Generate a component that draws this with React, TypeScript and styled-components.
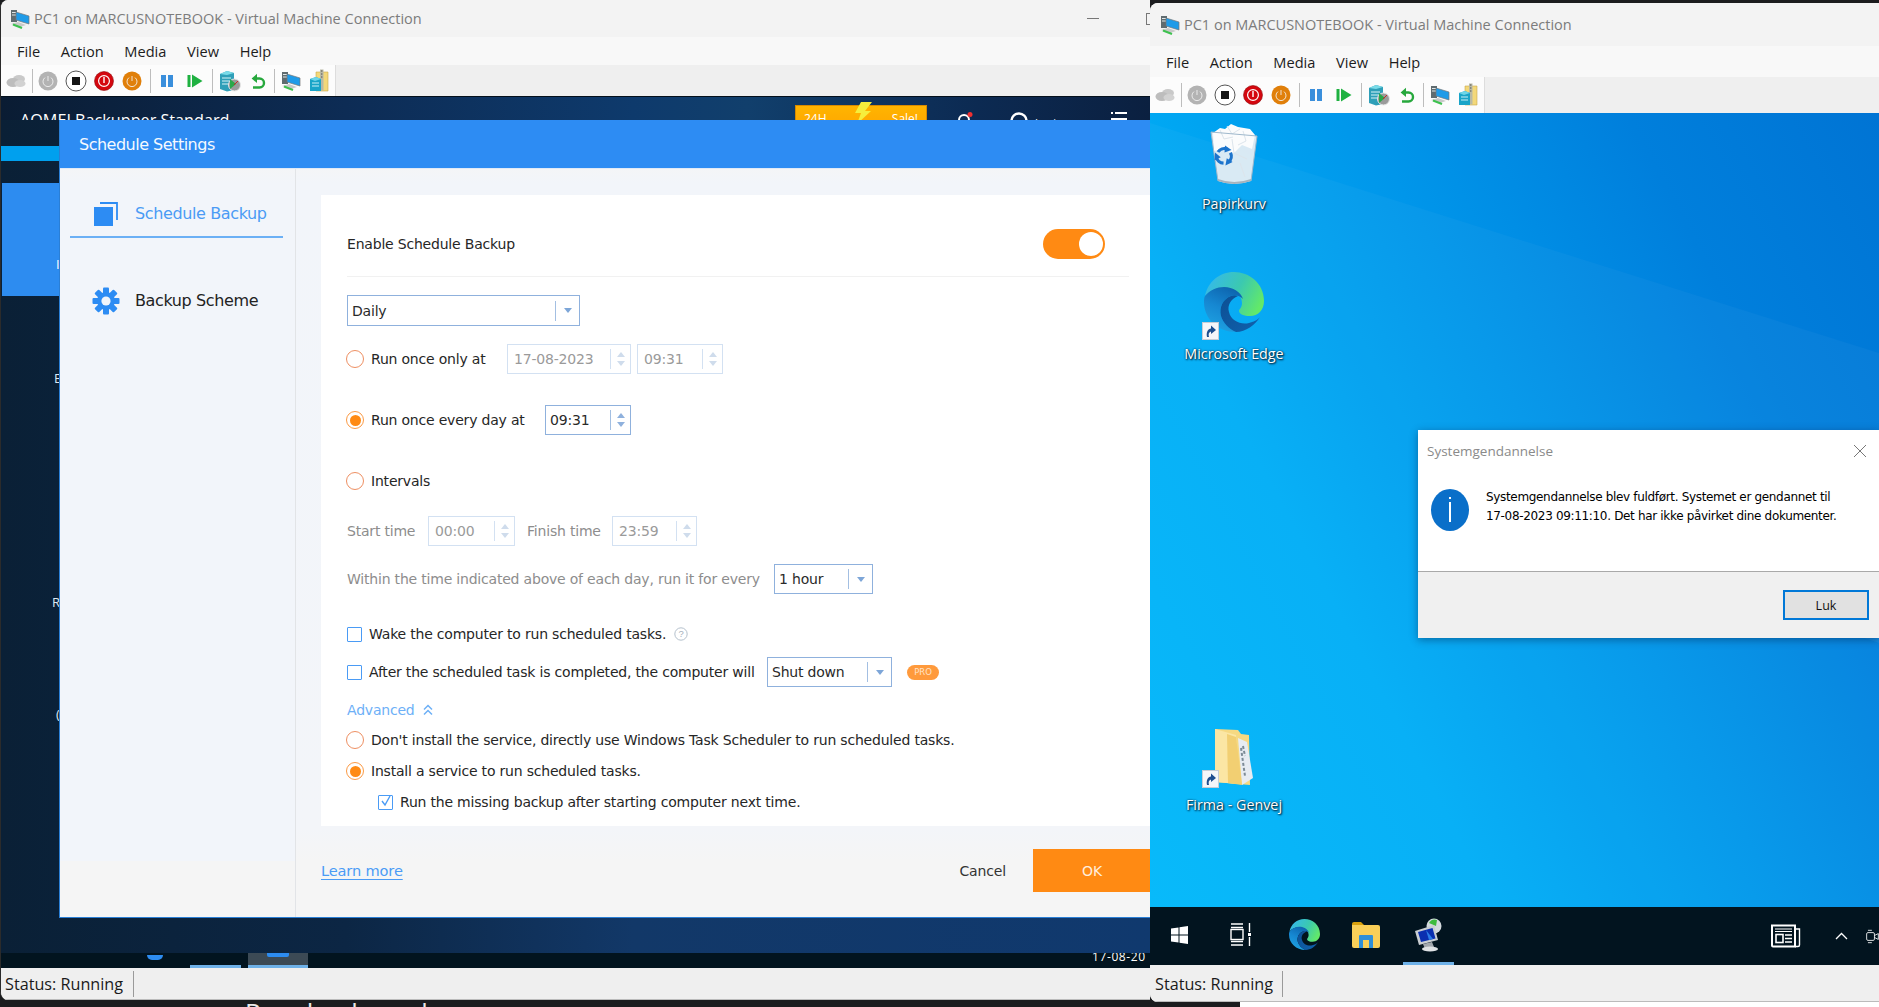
import { FC } from "react";
import styled, { createGlobalStyle } from "styled-components";

const Global = createGlobalStyle`
  html, body { margin: 0; padding: 0; height: 100%; overflow: hidden; background: #1b1c1e; }
  #root { width: 1879px; height: 1007px; overflow: hidden; }
`;

const UI = `"Open Sans", "Noto Sans", sans-serif`;
const TAHOMA = `"DejaVu Sans", "Noto Sans", sans-serif`;

const Page = styled.div`
  display: flex;
  width: 1879px;
  height: 1007px;
  overflow: hidden;
`;

const LeftColumn = styled.div`
  width: 1150px;
  display: flex;
  flex-direction: column;
`;

const RightColumn = styled.div`
  width: 729px;
  padding-top: 3px;
  display: flex;
  flex-direction: column;
`;

const Behind = styled.div`
  height: 7px;
  overflow: hidden;
  padding-left: 245px;
  font: 26px/24px ${UI};
  color: #e8e8e8;
  word-spacing: 2px;
`;

const WhiteScrap = styled.div`
  height: 5px;
  margin-left: 90px;
  background: #fff;
`;

const Window = styled.div<{ $h: number; $edge?: boolean }>`
  height: ${(p) => p.$h}px;
  display: flex;
  flex-direction: column;
  background: #f3f3f3;
  border-radius: 8px 0 0 8px;
  border-left: ${(p) => (p.$edge ? "1px solid #2b2b2b" : "none")};
  overflow: hidden;
`;

const TitleBar = styled.div<{ $h: number; $pad: number }>`
  height: ${(p) => p.$h}px;
  flex: none;
  display: flex;
  align-items: center;
  gap: 4px;
  padding-left: ${(p) => p.$pad}px;
  background: #f3f3f3;
  font: 14.5px ${UI};
  color: #7c7c7c;
`;

const MinButton = styled.div`
  width: 12px;
  height: 1px;
  background: #777;
  margin-left: auto;
`;

const MaxButton = styled.div`
  width: 10px;
  height: 10px;
  border: 1px solid #777;
  margin: 0 -8px 0 43px;
  flex: none;
`;

const MenuBar = styled.div<{ $h: number; $pad: number }>`
  height: ${(p) => p.$h}px;
  flex: none;
  display: flex;
  align-items: center;
  gap: 20.7px;
  padding-left: ${(p) => p.$pad}px;
  background: #f8f8f8;
  font: 14.6px ${UI};
  color: #1c1c1c;
`;

const ToolbarRow = styled.div<{ $h: number }>`
  height: ${(p) => p.$h}px;
  flex: none;
  background: #efefef;
`;

const Toolbar = styled.div<{ $pad: number }>`
  width: 335px;
  height: 100%;
  box-sizing: border-box;
  padding-left: ${(p) => p.$pad}px;
  display: flex;
  align-items: center;
  background: #fcfcfc;
  border-right: 1px solid #ddd;
`;

const Slot = styled.div`
  width: 28px;
  height: 24px;
  display: flex;
  align-items: center;
  justify-content: center;
`;

const ToolSep = styled.div<{ $l: number; $r: number }>`
  width: 1px;
  height: 24px;
  margin: 0 ${(p) => p.$r}px 0 ${(p) => p.$l}px;
  background: #bdbdbd;
`;

const StatusBar = styled.div<{ $h: number; $pad: number; $w: number }>`
  height: ${(p) => p.$h}px;
  flex: none;
  display: flex;
  align-items: center;
  padding-left: ${(p) => p.$pad}px;
  background: #efefef;
  font: 16.2px ${UI};
  color: #1a1a1a;
  box-shadow: inset 0 -1px 0 #bbb;

  span {
    width: ${(p) => p.$w}px;
    height: 26px;
    line-height: 26px;
    border-right: 1px solid #9a9a9a;
  }
`;

/* left guest: AOMEI */
const Screen = styled.div`
  position: relative;
  flex: 1;
  display: flex;
  flex-direction: column;
  overflow: hidden;
  background: #0a1c32;
`;

const AppBar = styled.div`
  height: 24px;
  flex: none;
  display: flex;
  overflow: hidden;
  background: linear-gradient(90deg, #0a1c33 0%, #0d2c55 30%, #0e3a6c 55%, #113f6c 65%, #0c2a52 85%, #0b2040 100%);
  border-top: 1px solid #04101c;
  box-sizing: border-box;
  color: #fff;
`;

const AppName = styled.div`
  width: 794px;
  padding: 14px 0 0 19px;
  box-sizing: border-box;
  font: 16.2px/18px ${UI};
`;

const Promo = styled.div`
  width: 132px;
  height: 40px;
  margin-top: 8px;
  padding: 0 8px;
  box-sizing: border-box;
  display: flex;
  justify-content: space-between;
  background: linear-gradient(#ffb400, #ff9d00);
  border: 1px solid #d88a00;
  position: relative;
  font: 12px/26px ${UI};

  svg {
    position: absolute;
    left: 56px;
    top: -4px;
  }
`;

const BarIcons = styled.div`
  display: flex;
  align-items: flex-start;
  padding-top: 15px;
  margin-left: 30px;

  svg {
    flex: none;
  }
`;

const BarGap = styled.div<{ $w: number }>`
  width: ${(p) => p.$w}px;
  flex: none;
`;

const LoginText = styled.span`
  font: 11px/14px ${UI};
  margin: 4px 0 0 6px;
`;

const AppMiddle = styled.div`
  flex: 1;
  background: linear-gradient(90deg, #0a2036 0%, #0c2644 30%, #123868 55%, #10396e 100%);
`;

const AppNav = styled.div`
  width: 59px;
  display: flex;
  flex-direction: column;
  color: #dfe8f2;
  font: 13px ${UI};
`;

const NavBand = styled.div`
  height: 15px;
  margin-top: 26px;
  background: #00a0ee;
`;

const NavActive = styled.div`
  height: 113px;
  margin: 22px 0 0 1px;
  background: #2d8cf0;
  padding: 72px 0 0 54px;
  box-sizing: border-box;
  color: #fff;
`;

const NavLetter = styled.div<{ $top: number; $left: number }>`
  margin: ${(p) => p.$top}px 0 0 ${(p) => p.$left}px;
  line-height: 18px;
`;

const AppBottom = styled.div`
  height: 15px;
  flex: none;
  display: flex;
  background: #02141f;
  overflow: hidden;
`;

const BottomDot = styled.div`
  width: 16px;
  height: 5px;
  margin: 2px 27px 0 146px;
  background: #2d8cf0;
  border-radius: 0 0 9px 9px;
`;

const BottomTab = styled.div<{ $w: number; $on?: boolean }>`
  width: ${(p) => p.$w}px;
  height: 15px;
  margin-right: 7px;
  box-sizing: border-box;
  background: ${(p) => (p.$on ? "#3c4a55" : "transparent")};
  border-bottom: 3px solid #6eb1e8;
  display: flex;
  justify-content: center;

  i {
    display: ${(p) => (p.$on ? "block" : "none")};
    width: 22px;
    height: 4px;
    background: #2d8cf0;
    border-radius: 0 0 2px 2px;
  }
`;

const BottomDate = styled.div`
  margin-left: auto;
  width: 58px;
  white-space: nowrap;
  overflow: hidden;
  font: 12px/12px ${UI};
  color: #fff;
  letter-spacing: 0.6px;
  margin-top: -2px;
`;

/* Schedule Settings */
const Dialog = styled.div`
  position: absolute;
  left: 58px;
  top: 24px;
  width: 1092px;
  height: 798px;
  display: flex;
  flex-direction: column;
  background: #f5f5f5;
  box-sizing: border-box;
  border-left: 1px solid #2a7fd6;
  border-bottom: 1px solid #2a7fd6;
`;

const DialogHead = styled.div`
  height: 49px;
  flex: none;
  padding-left: 19px;
  display: flex;
  align-items: center;
  background: #2d8cf3;
  border-bottom: 1px solid #dfeaf7;
  box-sizing: border-box;
  color: #f4f9ff;
  font: 16px ${TAHOMA};
  letter-spacing: -0.5px;
`;

const DialogBody = styled.div`
  flex: 1;
  display: flex;
  min-height: 0;
`;

const Side = styled.div`
  width: 236px;
  flex: none;
  box-sizing: border-box;
  border-right: 1px solid #e2e4e7;
  padding: 22px 12px 0 10px;
  background: linear-gradient(#f4f5f7 0, #f2f5fa 14px, #f2f5fa 692px, #f5f5f5 692px);
`;

const SideItem = styled.div<{ $on?: boolean }>`
  height: 47px;
  display: flex;
  align-items: center;
  box-sizing: border-box;
  border-bottom: ${(p) => (p.$on ? "2px solid #6cb0f5" : "none")};
  margin-bottom: ${(p) => (p.$on ? "39px" : "0")};
  color: ${(p) => (p.$on ? "#4a9bf5" : "#222")};
  font: 16px ${TAHOMA};
  letter-spacing: -0.38px;
`;

const SideIcon = styled.div`
  width: 65px;
  display: flex;
  justify-content: center;
  padding-left: 7px;
  box-sizing: border-box;
  flex: none;
`;

const Main = styled.div`
  flex: 1;
  display: flex;
  flex-direction: column;
  padding: 26px 0 0 25px;
  background: linear-gradient(#f4f5f7 0, #f2f5fa 14px, #f3f5f9 660px, #f5f5f5 692px);
  min-width: 0;
`;

const Panel = styled.div`
  height: 631px;
  flex: none;
  box-sizing: border-box;
  padding: 0 46px 0 26px;
  background: #fff;
  display: flex;
  flex-direction: column;
  font: 14px ${TAHOMA};
  letter-spacing: -0.2px;
  color: #262626;
`;

const Row = styled.div<{ $top: number; $h: number; $between?: boolean; $indent?: number }>`
  height: ${(p) => p.$h}px;
  margin-top: ${(p) => p.$top}px;
  padding-left: ${(p) => p.$indent ?? 0}px;
  flex: none;
  display: flex;
  align-items: center;
  justify-content: ${(p) => (p.$between ? "space-between" : "flex-start")};
  white-space: nowrap;
`;

const Rule = styled.div`
  height: 1px;
  margin: 17px -24px 0 0;
  background: #f1f1f1;
  flex: none;
`;

const Toggle = styled.div`
  width: 62px;
  height: 30px;
  border-radius: 15px;
  background: #ff8a13;
  position: relative;

  &::after {
    content: "";
    position: absolute;
    right: 2px;
    top: 3px;
    width: 24px;
    height: 24px;
    border-radius: 50%;
    background: #fff;
  }
`;

const Radio = styled.span<{ $on?: boolean }>`
  width: 18px;
  height: 18px;
  flex: none;
  box-sizing: border-box;
  margin: 0 7px 0 -1px;
  border-radius: 50%;
  border: 1.5px solid ${(p) => (p.$on ? "#fb9a45" : "#ee8f62")};
  display: flex;
  align-items: center;
  justify-content: center;

  &::after {
    content: "";
    display: ${(p) => (p.$on ? "block" : "none")};
    width: 11px;
    height: 11px;
    border-radius: 50%;
    background: #ff8a13;
  }
`;

const Check = styled.span`
  width: 15px;
  height: 15px;
  flex: none;
  box-sizing: border-box;
  margin-right: 7px;
  border: 1.5px solid #4a9bf5;
  border-radius: 1px;
  position: relative;

  svg {
    position: absolute;
    left: 1px;
    top: -2px;
  }
`;

const Label = styled.span<{ $w?: number; $dim?: boolean; $pl?: number }>`
  display: inline-block;
  flex: none;
  box-sizing: border-box;
  width: ${(p) => (p.$w ? `${p.$w}px` : "auto")};
  padding-left: ${(p) => p.$pl ?? 0}px;
  color: ${(p) => (p.$dim ? "#8d8d8d" : "inherit")};
`;

const Field = styled.div<{ $w: number; $h?: number; $soft?: boolean; $ml?: number }>`
  width: ${(p) => p.$w}px;
  height: ${(p) => p.$h ?? 30}px;
  margin-left: ${(p) => p.$ml ?? 0}px;
  flex: none;
  box-sizing: border-box;
  display: flex;
  align-items: center;
  padding-left: ${(p) => (p.$soft ? 6 : 4)}px;
  border: ${(p) => (p.$soft ? "1.5px solid #d3e1f2" : "1.5px solid #8fb1dd")};
  color: ${(p) => (p.$soft ? "#9a9a9a" : "#2a2a2a")};
  background: #fff;

  b {
    font-weight: 400;
    flex: 1;
  }
`;

const SpinArrows = styled.div<{ $soft?: boolean }>`
  width: 20px;
  height: 20px;
  flex: none;
  box-sizing: border-box;
  border-left: 1.5px solid ${(p) => (p.$soft ? "#d3e1f2" : "#a3bfe2")};
  display: flex;
  flex-direction: column;
  align-items: center;
  justify-content: center;
  gap: 4px;
`;

const Arrow = styled.i<{ $up?: boolean; $c: string }>`
  width: 0;
  height: 0;
  border-left: 4px solid transparent;
  border-right: 4px solid transparent;
  border-bottom: ${(p) => (p.$up ? `5px solid ${p.$c}` : "none")};
  border-top: ${(p) => (p.$up ? "none" : `5px solid ${p.$c}`)};
`;

const DropArrow = styled.div`
  width: 24px;
  height: 20px;
  flex: none;
  box-sizing: border-box;
  border-left: 1.5px solid #a3bfe2;
  display: flex;
  align-items: center;
  justify-content: center;
`;

const Pro = styled.span`
  width: 32px;
  height: 15px;
  margin-left: 15px;
  border-radius: 8px;
  background: #ff9a3c;
  color: #ffe3c6;
  font: 8.5px/15px ${TAHOMA};
  letter-spacing: 0;
  text-align: center;
`;

const Advanced = styled.span`
  color: #6db0f7;
  display: flex;
  align-items: center;
  gap: 8px;
`;

const HelpWrap = styled.span`
  margin-left: 8px;
  display: flex;
`;

const DialogFoot = styled.div`
  flex: 1;
  display: flex;
  align-items: center;
  padding-bottom: 2px;
  font: 14px ${TAHOMA};
  letter-spacing: -0.15px;
`;

const LearnMore = styled.span`
  color: #4a9bf5;
  font-size: 14.6px;
  text-decoration: underline;
  text-underline-offset: 3px;
`;

const Cancel = styled.span`
  margin-left: auto;
  margin-right: 27px;
  color: #333;
`;

const OkButton = styled.div`
  width: 118px;
  height: 43px;
  background: #ff8a13;
  color: #ffeede;
  display: flex;
  align-items: center;
  justify-content: center;
`;

/* right guest: Windows 10 */
const Desktop = styled.div`
  position: relative;
  flex: 1;
  overflow: hidden;
  background: linear-gradient(62deg, #00b8fa 0%, #00aef6 30%, #0096ea 55%, #007fdc 78%, #0074d4 100%);
`;

const Wallpaper = styled.svg`
  position: absolute;
  inset: 0;
`;

const DeskIcon = styled.div<{ $x: number; $y: number }>`
  position: absolute;
  left: ${(p) => p.$x}px;
  top: ${(p) => p.$y}px;
  width: 120px;
  display: flex;
  flex-direction: column;
  align-items: center;
`;

const DeskArt = styled.div<{ $h: number }>`
  height: ${(p) => p.$h}px;
  position: relative;
`;

const DeskLabel = styled.div<{ $mt: number }>`
  margin-top: ${(p) => p.$mt}px;
  font: 14.3px/18px ${UI};
  color: #fff;
  text-shadow: 1px 1px 2px #012, 0 0 2px rgba(0, 20, 40, 0.8);
  white-space: nowrap;
`;

const ShortcutBadge = styled.div<{ $x: number; $y: number }>`
  position: absolute;
  left: ${(p) => p.$x}px;
  top: ${(p) => p.$y}px;
  width: 17px;
  height: 18px;
  background: #f4f6f9;
  border: 1px solid #c5cdd6;
  box-sizing: border-box;
  display: flex;
  align-items: center;
  justify-content: center;
`;

const SysDialog = styled.div`
  position: absolute;
  left: 268px;
  top: 317px;
  width: 461px;
  height: 208px;
  display: flex;
  flex-direction: column;
  background: #fff;
  box-shadow: 0 2px 8px rgba(0, 30, 70, 0.45);
`;

const SysHead = styled.div`
  height: 42px;
  flex: none;
  display: flex;
  align-items: center;
  justify-content: space-between;
  padding: 0 12px 0 9px;
  font: 13.5px ${UI};
  color: #8a8a8a;
`;

const SysBody = styled.div`
  height: 100px;
  flex: none;
  display: flex;
  padding: 15px 0 0 13px;
  box-sizing: border-box;
  border-bottom: 1px solid #a9a9a9;
`;

const InfoCircle = styled.div`
  width: 38px;
  height: 42px;
  flex: none;
  margin: 2px 17px 0 0;
  border-radius: 50%;
  background: #0a6fc9;
  display: flex;
  align-items: center;
  justify-content: center;
`;

const InfoMark = styled.div`
  width: 2px;
  height: 20px;
  margin-top: 4px;
  background: #fff;
  position: relative;

  &::before {
    content: "";
    position: absolute;
    top: -5px;
    left: 0;
    width: 2px;
    height: 2px;
    background: #fff;
  }
`;

const SysText = styled.div`
  font: 12px/19px ${TAHOMA};
  letter-spacing: -0.33px;
  color: #000;
  white-space: nowrap;
  margin-top: 1px;
`;

const SysFoot = styled.div`
  flex: 1;
  display: flex;
  justify-content: flex-end;
  padding: 18px 10px 0 0;
  background: #f0f0f0;
`;

const LukButton = styled.div`
  width: 86px;
  height: 30px;
  box-sizing: border-box;
  border: 2px solid #0078d7;
  background: #e1e1e1;
  display: flex;
  align-items: center;
  justify-content: center;
  font: 12.5px ${UI};
  color: #111;
`;

const Taskbar = styled.div`
  height: 58px;
  flex: none;
  display: flex;
  align-items: center;
  background: #02141f;
`;

const TaskSlot = styled.div<{ $w: number; $on?: boolean; $ml?: number }>`
  width: ${(p) => p.$w}px;
  height: 58px;
  margin-left: ${(p) => p.$ml ?? 0}px;
  flex: none;
  display: flex;
  align-items: center;
  justify-content: center;
  box-sizing: border-box;
  border-bottom: 3px solid ${(p) => (p.$on ? "#6eb1e8" : "transparent")};
`;

const Tray = styled.div`
  margin-left: auto;
  display: flex;
  align-items: center;
`;

const TraySlot = styled.div<{ $ml: number }>`
  margin-left: ${(p) => p.$ml}px;
  display: flex;
  flex: none;
`;

const TrayClip = styled.div`
  width: 13px;
  margin-left: 18px;
  overflow: hidden;
  display: flex;
`;

/* drawings */
const CloudIcon = () => (
  <svg width="20" height="14" viewBox="0 0 20 14">
    <ellipse cx="13" cy="5" rx="6" ry="4" fill="#c9c9c9" />
    <ellipse cx="7" cy="8.5" rx="6.5" ry="4.5" fill="#bdbdbd" />
    <ellipse cx="14" cy="9.5" rx="5.5" ry="3.6" fill="#d2d2d2" />
  </svg>
);

const PowerIcon: FC<{ bg: string }> = ({ bg }) => (
  <svg width="20" height="20" viewBox="0 0 20 20">
    <circle cx="10" cy="10" r="9.5" fill={bg} />
    <path d="M7 6.6a5 5 0 1 0 6 0" fill="none" stroke="#f4f4f4" strokeWidth="1" opacity=".85" />
    <path d="M10 5v5" stroke="#f4f4f4" strokeWidth="1" opacity=".85" />
  </svg>
);

const StopIcon = () => (
  <svg width="22" height="22" viewBox="0 0 22 22">
    <circle cx="11" cy="11" r="10" fill="#fff" stroke="#555" strokeWidth="1" />
    <rect x="7" y="7" width="8" height="8" fill="#151515" />
  </svg>
);

const ResetIcon = () => (
  <svg width="20" height="20" viewBox="0 0 20 20">
    <circle cx="10" cy="10" r="9.5" fill="#d4070f" stroke="#8e0b0b" strokeWidth=".6" />
    <circle cx="10" cy="10" r="5.4" fill="none" stroke="#fff" strokeWidth="1.2" />
    <rect x="9.3" y="6" width="1.4" height="6" fill="#fff" />
  </svg>
);

const PauseIcon = () => (
  <svg width="14" height="14" viewBox="0 0 14 14">
    <rect x="1" y="1" width="5" height="12" fill="#3a8fdc" />
    <rect x="8" y="1" width="5" height="12" fill="#3a8fdc" />
  </svg>
);

const PlayIcon = () => (
  <svg width="16" height="14" viewBox="0 0 16 14">
    <rect x="0.5" y="1" width="3" height="12" fill="#1fb141" />
    <path d="M5 0.5 15.5 7 5 13.5Z" fill="#1fb141" />
  </svg>
);

const CheckpointIcon = () => (
  <svg width="22" height="22" viewBox="0 0 22 22">
    <path d="M1 4 8 1l7 2v17l-7 1.5L1 19Z" fill="#2f9fb8" />
    <path d="M1 4 8 1l7 2-7 2Z" fill="#7adbe8" />
    <path d="M3 8h9M3 11h9M3 14h9" stroke="#d6f3f7" strokeWidth="1" />
    <circle cx="15.5" cy="15" r="6" fill="#9b9b9b" stroke="#e6e6e6" strokeWidth="1" />
    <path d="M11 9l6 5-6 5Z" fill="#2aa84a" />
    <path d="M15 15l4-4" stroke="#c22" strokeWidth="1" />
  </svg>
);

const UndoIcon = () => (
  <svg width="16" height="18" viewBox="0 0 16 18">
    <path d="M3 15.5h6.5a4.5 4.5 0 0 0 0-9H6" fill="none" stroke="#27a83d" strokeWidth="2.4" />
    <path d="M7 1.8 1.6 6.5 7 11Z" fill="#27a83d" />
  </svg>
);

const VmIcon = () => (
  <svg width="20" height="20" viewBox="0 0 20 20">
    <rect x="1" y="1" width="6" height="12" fill="#5f6b6f" />
    <rect x="2" y="3" width="4" height="1" fill="#dfe6e6" />
    <rect x="2" y="5.5" width="4" height="1" fill="#dfe6e6" />
    <path d="M6 3 19 7v8L6 11Z" fill="#1f9be8" stroke="#777" strokeWidth=".7" />
    <path d="M1 15l9 3 6-2-8-3Z" fill="#c9c9c9" />
    <path d="M3 15.5l9 3.5" stroke="#3dc14f" strokeWidth="2" />
  </svg>
);

const ZipIcon = () => (
  <svg width="20" height="24" viewBox="0 0 20 24">
    <path d="M7 3h12v19H7Z" fill="#f3d879" stroke="#c9a94a" strokeWidth=".6" />
    <rect x="11" y="0.5" width="3.5" height="21" fill="#b9b9a5" />
    <path d="M12 2h1.4M12 5h1.4M12 8h1.4" stroke="#555" />
    <path d="M1 10l6-2 5 2v12H1Z" fill="#19a4c8" />
    <path d="M1 10l6-2 5 2-6 2Z" fill="#6ed6e8" />
    <path d="M3 14h7M3 17h7" stroke="#c8f0f7" />
  </svg>
);

const HvToolbar: FC<{ pad: number }> = ({ pad }) => (
  <Toolbar $pad={pad}>
    <Slot><CloudIcon /></Slot>
    <ToolSep $l={2} $r={1} />
    <Slot><PowerIcon bg="#b3b3b3" /></Slot>
    <Slot><StopIcon /></Slot>
    <Slot><ResetIcon /></Slot>
    <Slot><PowerIcon bg="#e07f0a" /></Slot>
    <ToolSep $l={4} $r={2} />
    <Slot><PauseIcon /></Slot>
    <Slot><PlayIcon /></Slot>
    <ToolSep $l={3} $r={3} />
    <Slot><CheckpointIcon /></Slot>
    <Slot><UndoIcon /></Slot>
    <ToolSep $l={2} $r={2} />
    <Slot><VmIcon /></Slot>
    <Slot><ZipIcon /></Slot>
  </Toolbar>
);

const MenuItems = () => (
  <>
    <span>File</span>
    <span>Action</span>
    <span>Media</span>
    <span>View</span>
    <span>Help</span>
  </>
);

const ScheduleIcon = () => (
  <svg width="26" height="26" viewBox="0 0 26 26">
    <path d="M7 2h17v17" fill="none" stroke="#2d8cf3" strokeWidth="1.8" />
    <rect x="1" y="6" width="19" height="19" fill="#2d8cf3" />
  </svg>
);

const GearIcon = () => (
  <svg width="28" height="28" viewBox="0 0 28 28">
    <g fill="#2d8cf3">
      {[0, 45, 90, 135, 180, 225, 270, 315].map((a) => (
        <rect key={a} x="11" y="0.5" width="6" height="7" rx="1" transform={`rotate(${a} 14 14)`} />
      ))}
    </g>
    <circle cx="14" cy="14" r="9" fill="#2d8cf3" />
    <circle cx="14" cy="14" r="4.6" fill="#f2f5fa" />
  </svg>
);

const Spin: FC<{ value: string; w: number; soft?: boolean; ml?: number }> = ({ value, w, soft, ml }) => (
  <Field $w={w} $soft={soft} $ml={ml}>
    <b>{value}</b>
    <SpinArrows $soft={soft}>
      <Arrow $up $c={soft ? "#cfdcec" : "#8fb1dd"} />
      <Arrow $c={soft ? "#cfdcec" : "#8fb1dd"} />
    </SpinArrows>
  </Field>
);

const Select: FC<{ value: string; w: number; h?: number }> = ({ value, w, h }) => (
  <Field $w={w} $h={h}>
    <b>{value}</b>
    <DropArrow>
      <Arrow $c="#7da6d8" />
    </DropArrow>
  </Field>
);

const HelpIcon = () => (
  <HelpWrap>
    <svg width="14" height="14" viewBox="0 0 14 14">
      <circle cx="7" cy="7" r="6.2" fill="none" stroke="#b4c0cc" />
      <text x="7" y="10.3" textAnchor="middle" fontSize="9.5" fill="#a5b0bb" fontFamily="Liberation Sans">?</text>
    </svg>
  </HelpWrap>
);

const Chevrons = () => (
  <svg width="10" height="12" viewBox="0 0 10 12">
    <path d="M1 5.5 5 1.5l4 4M1 10.5l4-4 4 4" fill="none" stroke="#6db0f7" strokeWidth="1.5" />
  </svg>
);

const EdgeIcon: FC<{ size: number }> = ({ size }) => (
  <svg width={size} height={size} viewBox="0 0 60 60">
    <defs>
      <linearGradient id="edgeTop" x1="0" y1="0.2" x2="1" y2="0.6">
        <stop offset="0" stopColor="#35b8ee" />
        <stop offset="0.55" stopColor="#3bc9b0" />
        <stop offset="1" stopColor="#63e968" />
      </linearGradient>
      <linearGradient id="edgeLeft" x1="0.7" y1="0" x2="0.3" y2="1">
        <stop offset="0" stopColor="#0d63ad" />
        <stop offset="0.5" stopColor="#1688d2" />
        <stop offset="1" stopColor="#1fa3e2" />
      </linearGradient>
      <linearGradient id="edgeWave" x1="0" y1="0" x2="1" y2="1">
        <stop offset="0" stopColor="#0d4f94" />
        <stop offset="1" stopColor="#0f62ae" />
      </linearGradient>
    </defs>
    <path d="M30 0C45 0 60 11 60 29c0 9-6 15-14 15-6 0-11-2-11-5 0-2 3-3 3-8 0-8-8-15-18-15C11 16 5 20 1 24 4 10 15 0 30 0Z" fill="url(#edgeTop)" />
    <path d="M1 24c5-6 12-9 19-9 9 0 17 5 19 12-3-3-8-5-12-3-8 3-12 11-10 20 2 7 8 13 15 16C14 60 0 47 0 30c0-2 0-4 1-6Z" fill="url(#edgeLeft)" />
    <path d="M17 44c-2-9 2-17 10-20 2-1 5-1 7 0-7 3-11 9-9 16 2 9 12 13 20 11 4-1 9-3 11-6-5 8-14 15-24 15-7-3-13-9-15-16Z" fill="url(#edgeWave)" />
  </svg>
);

const ShortcutArrow = () => (
  <svg width="13" height="14" viewBox="0 0 13 14">
    <path d="M3 13C2 8 4 5 7 4.5V1.5L12 6 7 10V7.5C5 8 4 10 5 13Z" fill="#1d4e8f" />
  </svg>
);

const RecycleArc = ({ a }: { a: number }) => (
  <g transform={`rotate(${a} 14 33)`}>
    <path d="M8 29a7.5 7.5 0 0 1 9-3" fill="none" stroke="#1c74cc" strokeWidth="3.2" />
    <path d="M15 22.5 21.5 27 14.5 29.5Z" fill="#1c74cc" />
  </g>
);

const RecycleBin = () => (
  <svg width="48" height="62" viewBox="0 0 48 62">
    <path d="M1 9 47 13 41 58Q24 64 8 58Z" fill="#e9eff4" opacity=".93" />
    <path d="M3 10 10 5l5 1 6-5 7 3 6 1 6 1 5 6-3 14-10-4-8 8-12-4-8 2Z" fill="#fbfcfd" />
    <path d="M17 3l5 8 8-5M10 7l4 9 9-2M33 8l3 10-8 4M22 16l2 14 13 6M30 40l5 14" fill="none" stroke="#dde5ec" strokeWidth="1" />
    <path d="M1 9 47 13M1 9 8 58M47 13 41 58" stroke="#9fb8cc" strokeWidth="1" fill="none" />
    <path d="M8 56Q24 62 41 56L41 58Q24 64 8 58Z" fill="#a7b3bd" />
    <RecycleArc a={0} />
    <RecycleArc a={120} />
    <RecycleArc a={240} />
  </svg>
);

const FolderShortcut = () => (
  <svg width="40" height="58" viewBox="0 0 40 58">
    <path d="M1 1 24 2 27 6 35 7 36 57 1 54Z" fill="#f6d982" />
    <path d="M24 10 33 14 39 50 28 57Z" fill="#e7ecf2" />
    <path d="M27 20l4 28M29 18l2 10" stroke="#7d8b96" strokeWidth="2" strokeDasharray="3 2" />
    <path d="M1 1 22 7 24 56 1 54Z" fill="#fbe6a4" />
    <path d="M13 6 22 9 28 57 14 55Z" fill="#f2cf72" />
  </svg>
);

const StartIcon = () => (
  <svg width="17" height="18" viewBox="0 0 17 18">
    <path d="M0 2.6 7.5 1.4V8.4H0ZM8.5 1.2 17 0V8.4H8.5ZM0 9.4H7.5V16.6L0 15.4ZM8.5 9.4H17V18L8.5 16.8Z" fill="#fff" />
  </svg>
);

const TaskViewIcon = () => (
  <svg width="21" height="23" viewBox="0 0 21 23" fill="none" stroke="#fff" strokeWidth="1.4">
    <path d="M1 1h12M1 22h12M1 4.5h12M1 18.5h12" />
    <rect x="1" y="6.5" width="12" height="10" />
    <path d="M19.5 0v9M19.5 14v9" />
    <rect x="18" y="10" width="3" height="3" fill="#fff" stroke="none" />
  </svg>
);

const ExplorerIcon = () => (
  <svg width="28" height="26" viewBox="0 0 28 26">
    <path d="M0 2a2 2 0 0 1 2-2h7l3 3H0Z" fill="#d9a10d" />
    <path d="M0 3h26a2 2 0 0 1 2 2v19a2 2 0 0 1-2 2H2a2 2 0 0 1-2-2Z" fill="#f9cf58" />
    <path d="M7 26V14a1 1 0 0 1 1-1h12a1 1 0 0 1 1 1v12h-4v-8h-6v8Z" fill="#2f8fd8" />
  </svg>
);

const RestoreAppIcon = () => (
  <svg width="31" height="34" viewBox="0 0 31 34">
    <circle cx="21" cy="8" r="7.5" fill="#d4dade" />
    <path d="M16 5a7 7 0 0 1 8-3l-1 6Z" fill="#3dbb3d" />
    <path d="M2 13 21 7l4 15-19 5Z" fill="#c9ced2" />
    <path d="M5 14 19.5 10l3 10.5L8 24Z" fill="#0a2fb0" />
    <path d="M13 12l3 10 4-1Z" fill="#2a7de8" />
    <path d="M10 26l9-2 2 5-9 2Z" fill="#a2a8ae" />
    <ellipse cx="17" cy="31" rx="8" ry="2.6" fill="#dfe2e5" />
  </svg>
);

const NewsIcon = () => (
  <svg width="30" height="24" viewBox="0 0 30 24" fill="none" stroke="#fff">
    <path d="M1 1.5h23v21H2a1 1 0 0 1-1-1Z" strokeWidth="2" />
    <path d="M24 5h4.5v16a1.5 1.5 0 0 1-1.5 1.5h-3" strokeWidth="1.4" />
    <path d="M4 5h17M4 7.5h17" strokeWidth="1" />
    <rect x="5" y="10.5" width="7" height="8" strokeWidth="1.6" />
    <path d="M14 11h7M14 14.5h7M14 18h7" strokeWidth="1.4" />
  </svg>
);

const Caret = () => (
  <svg width="13" height="8" viewBox="0 0 13 8">
    <path d="M1 7 6.5 1.5 12 7" fill="none" stroke="#fff" strokeWidth="1.3" />
  </svg>
);

const MeetIcon = () => (
  <svg width="20" height="21" viewBox="0 0 20 21" fill="none" stroke="#fff" strokeWidth="1.3">
    <path d="M3 1h6M3 20h6" />
    <rect x="1" y="4.5" width="12" height="12" rx="2" />
    <path d="M13 9l6-3v9l-6-3" />
  </svg>
);

const ScheduleDialog = () => (
  <Dialog>
    <DialogHead>Schedule Settings</DialogHead>
    <DialogBody>
      <Side>
        <SideItem $on>
          <SideIcon><ScheduleIcon /></SideIcon>
          Schedule Backup
        </SideItem>
        <SideItem>
          <SideIcon><GearIcon /></SideIcon>
          Backup Scheme
        </SideItem>
      </Side>
      <Main>
        <Panel>
          <Row $top={34} $h={30} $between>
            Enable Schedule Backup
            <Toggle />
          </Row>
          <Rule />
          <Row $top={18} $h={31}>
            <Select value="Daily" w={233} h={31} />
          </Row>
          <Row $top={18} $h={30}>
            <Radio />
            <Label $w={136}>Run once only at</Label>
            <Spin value="17-08-2023" w={124} soft />
            <Spin value="09:31" w={86} soft ml={6} />
          </Row>
          <Row $top={31} $h={30}>
            <Radio $on />
            <Label $w={174}>Run once every day at</Label>
            <Spin value="09:31" w={86} />
          </Row>
          <Row $top={31} $h={30}>
            <Radio />
            <Label>Intervals</Label>
          </Row>
          <Row $top={20} $h={30}>
            <Label $w={81} $dim>Start time</Label>
            <Spin value="00:00" w={87} soft />
            <Label $w={97} $pl={12} $dim>Finish time</Label>
            <Spin value="23:59" w={85} soft />
          </Row>
          <Row $top={18} $h={30}>
            <Label $w={427} $dim>Within the time indicated above of each day, run it for every</Label>
            <Select value="1 hour" w={99} />
          </Row>
          <Row $top={26} $h={28}>
            <Check />
            Wake the computer to run scheduled tasks.
            <HelpIcon />
          </Row>
          <Row $top={9} $h={30}>
            <Check />
            <Label $w={398}>After the scheduled task is completed, the computer will</Label>
            <Select value="Shut down" w={125} />
            <Pro>PRO</Pro>
          </Row>
          <Row $top={12} $h={22}>
            <Advanced>Advanced <Chevrons /></Advanced>
          </Row>
          <Row $top={6} $h={26}>
            <Radio />
            Don't install the service, directly use Windows Task Scheduler to run scheduled tasks.
          </Row>
          <Row $top={5} $h={26}>
            <Radio $on />
            Install a service to run scheduled tasks.
          </Row>
          <Row $top={5} $h={26} $indent={31}>
            <Check>
              <svg width="13" height="14" viewBox="0 0 13 14">
                <path d="M2 7l3 4 5-9" fill="none" stroke="#4a9bf5" strokeWidth="1.4" />
              </svg>
            </Check>
            Run the missing backup after starting computer next time.
          </Row>
        </Panel>
        <DialogFoot>
          <LearnMore>Learn more</LearnMore>
          <Cancel>Cancel</Cancel>
          <OkButton>OK</OkButton>
        </DialogFoot>
      </Main>
    </DialogBody>
  </Dialog>
);

export default function App() {
  return (
    <>
      <Global />
      <Page>
        <LeftColumn>
          <Window $h={1000} $edge>
            <TitleBar $h={37} $pad={9}>
              <VmIcon />
              <span>PC1 on MARCUSNOTEBOOK - Virtual Machine Connection</span>
              <MinButton />
              <MaxButton />
            </TitleBar>
            <MenuBar $h={28} $pad={16}><MenuItems /></MenuBar>
            <ToolbarRow $h={31}><HvToolbar pad={1} /></ToolbarRow>
            <Screen>
              <AppBar>
                <AppName>AOMEI Backupper Standard</AppName>
                <Promo>
                  <span>24H</span>
                  <svg width="22" height="22" viewBox="0 0 22 22">
                    <path d="M9 0h11l-7 9h6L5 22l4-11H3Z" fill="#f6ee3c" />
                  </svg>
                  <span>Sale!</span>
                </Promo>
                <BarIcons>
                  <svg width="18" height="14" viewBox="0 0 18 14">
                    <path d="M2 14V8a5 5 0 0 1 10 0v6" fill="none" stroke="#fff" strokeWidth="2" />
                    <circle cx="13" cy="2.5" r="2.5" fill="#f03030" />
                  </svg>
                  <BarGap $w={34} />
                  <svg width="20" height="14" viewBox="0 0 20 14">
                    <circle cx="10" cy="9" r="7.5" fill="none" stroke="#fff" strokeWidth="2.4" />
                  </svg>
                  <LoginText>Login</LoginText>
                  <BarGap $w={48} />
                  <svg width="18" height="10" viewBox="0 0 18 10">
                    <rect x="0" y="0" width="2" height="2" fill="#fff" />
                    <rect x="4" y="0" width="12" height="2" fill="#fff" />
                    <rect x="0" y="6" width="16" height="2" fill="#fff" />
                  </svg>
                </BarIcons>
              </AppBar>
              <AppMiddle>
                <AppNav>
                  <NavBand />
                  <NavActive>I</NavActive>
                  <NavLetter $top={73} $left={53}>B</NavLetter>
                  <NavLetter $top={206} $left={51}>R</NavLetter>
                  <NavLetter $top={94} $left={55}>(</NavLetter>
                </AppNav>
              </AppMiddle>
              <AppBottom>
                <BottomDot />
                <BottomTab $w={51} />
                <BottomTab $w={60} $on><i /></BottomTab>
                <BottomDate>17-08-20</BottomDate>
              </AppBottom>
              <ScheduleDialog />
            </Screen>
            <StatusBar $h={32} $pad={4} $w={128}><span>Status: Running</span></StatusBar>
          </Window>
          <Behind>People also ask</Behind>
        </LeftColumn>

        <RightColumn>
          <Window $h={999}>
            <TitleBar $h={43} $pad={10}>
              <VmIcon />
              <span>PC1 on MARCUSNOTEBOOK - Virtual Machine Connection</span>
            </TitleBar>
            <MenuBar $h={31} $pad={16}><MenuItems /></MenuBar>
            <ToolbarRow $h={36}><HvToolbar pad={1} /></ToolbarRow>
            <Desktop>
              <Wallpaper width="729" height="794" viewBox="0 0 729 794">
                <polygon points="0,10 729,240 729,794 0,794" fill="#fff" opacity=".03" />
                <polygon points="560,440 729,500 729,530 640,500" fill="#fff" opacity=".05" />
              </Wallpaper>
              <DeskIcon $x={24} $y={10}>
                <DeskArt $h={62}><RecycleBin /></DeskArt>
                <DeskLabel $mt={10}>Papirkurv</DeskLabel>
              </DeskIcon>
              <DeskIcon $x={24} $y={159}>
                <DeskArt $h={70}>
                  <EdgeIcon size={60} />
                  <ShortcutBadge $x={-2} $y={50}><ShortcutArrow /></ShortcutBadge>
                </DeskArt>
                <DeskLabel $mt={3}>Microsoft Edge</DeskLabel>
              </DeskIcon>
              <DeskIcon $x={24} $y={615}>
                <DeskArt $h={60}>
                  <FolderShortcut />
                  <ShortcutBadge $x={-12} $y={42}><ShortcutArrow /></ShortcutBadge>
                </DeskArt>
                <DeskLabel $mt={8}>Firma - Genvej</DeskLabel>
              </DeskIcon>
              <SysDialog>
                <SysHead>
                  Systemgendannelse
                  <svg width="14" height="14" viewBox="0 0 14 14">
                    <path d="M1 1l12 12M13 1 1 13" stroke="#777" strokeWidth="1" />
                  </svg>
                </SysHead>
                <SysBody>
                  <InfoCircle><InfoMark /></InfoCircle>
                  <SysText>
                    Systemgendannelse blev fuldført. Systemet er gendannet til<br />
                    17-08-2023 09:11:10. Det har ikke påvirket dine dokumenter.
                  </SysText>
                </SysBody>
                <SysFoot>
                  <LukButton>Luk</LukButton>
                </SysFoot>
              </SysDialog>
            </Desktop>
            <Taskbar>
              <TaskSlot $w={58}><StartIcon /></TaskSlot>
              <TaskSlot $w={64}><TaskViewIcon /></TaskSlot>
              <TaskSlot $w={64}><EdgeIcon size={31} /></TaskSlot>
              <TaskSlot $w={60}><ExplorerIcon /></TaskSlot>
              <TaskSlot $w={51} $ml={7} $on><RestoreAppIcon /></TaskSlot>
              <Tray>
                <TraySlot $ml={0}><NewsIcon /></TraySlot>
                <TraySlot $ml={34}><Caret /></TraySlot>
                <TrayClip><MeetIcon /></TrayClip>
              </Tray>
            </Taskbar>
            <StatusBar $h={37} $pad={5} $w={127}><span>Status: Running</span></StatusBar>
          </Window>
          <WhiteScrap />
        </RightColumn>
      </Page>
    </>
  );
}
